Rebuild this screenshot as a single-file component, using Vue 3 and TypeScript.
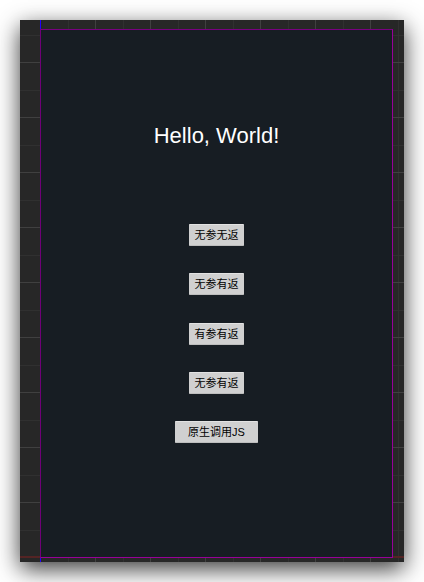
<script setup lang="ts">
interface BridgeAction {
  id: string
  label: string
  wide?: boolean
}

const actions: BridgeAction[] = [
  { id: 'plain', label: '无参无返' },
  { id: 'returns', label: '无参有返' },
  { id: 'params-returns', label: '有参有返' },
  { id: 'returns-again', label: '无参有返' },
  { id: 'native-js', label: '原生调用JS', wide: true },
]
</script>

<template>
  <div class="page">
    <div class="editor">
      <main class="canvas">
        <h1 class="title">Hello, World!</h1>
        <div class="actions">
          <button
            v-for="action in actions"
            :key="action.id"
            type="button"
            class="action"
            :class="{ wide: action.wide }"
          >
            {{ action.label }}
          </button>
        </div>
      </main>
    </div>
  </div>
</template>

<style>
body {
  background: #fff;
}
</style>

<style scoped>
.page {
  box-sizing: border-box;
  display: flex;
  min-height: 100vh;
  padding: 20px;
  font-family: "Liberation Sans", "Noto Sans CJK SC", sans-serif;
}

/* Scene grid with the blue vertical and red horizontal axes */
.editor {
  flex: 1;
  display: flex;
  box-sizing: border-box;
  padding: 9px 11px 4px 20px;
  background-color: #272727;
  background-image:
    linear-gradient(#2400ff, #2400ff),
    linear-gradient(#542424, #542424),
    linear-gradient(#404040 1px, transparent 1px),
    linear-gradient(90deg, #404040 1px, transparent 1px),
    linear-gradient(#303030 1px, transparent 1px),
    linear-gradient(90deg, #303030 1px, transparent 1px);
  background-size:
    1px 100%,
    100% 2px,
    55px 55px,
    55px 55px,
    55px 55px,
    55px 55px;
  background-position:
    20px 0,
    0 calc(100% - 4px),
    0 42px,
    20px 0,
    0 15px,
    48px 0;
  background-repeat: no-repeat, no-repeat, repeat, repeat, repeat, repeat;
  box-shadow: 0 7px 22px rgba(0, 0, 0, 0.78);
}

.canvas {
  flex: 1;
  display: flex;
  flex-direction: column;
  align-items: center;
  box-sizing: border-box;
  padding-top: 92px;
  border: 1px solid #980098;
  border-top-color: #780080;
  border-left-color: #700078;
  background: #171d23;
}

.title {
  margin: 0 0 74px;
  font-size: 22px;
  font-weight: 400;
  line-height: 28px;
  color: #fff;
}

.actions {
  display: flex;
  flex-direction: column;
  align-items: center;
  justify-content: space-between;
  min-height: 219px;
}

.action {
  box-sizing: border-box;
  min-width: 55px;
  height: 22px;
  padding: 0 4px;
  border: 0;
  border-top: 1px solid #e2e2e2;
  border-bottom: 1px solid #bdbdbd;
  border-radius: 1px;
  background: #d0d0d0;
  color: #000;
  font: inherit;
  font-size: 11px;
  line-height: 20px;
  white-space: nowrap;
}

.action.wide {
  min-width: 83px;
}
</style>
